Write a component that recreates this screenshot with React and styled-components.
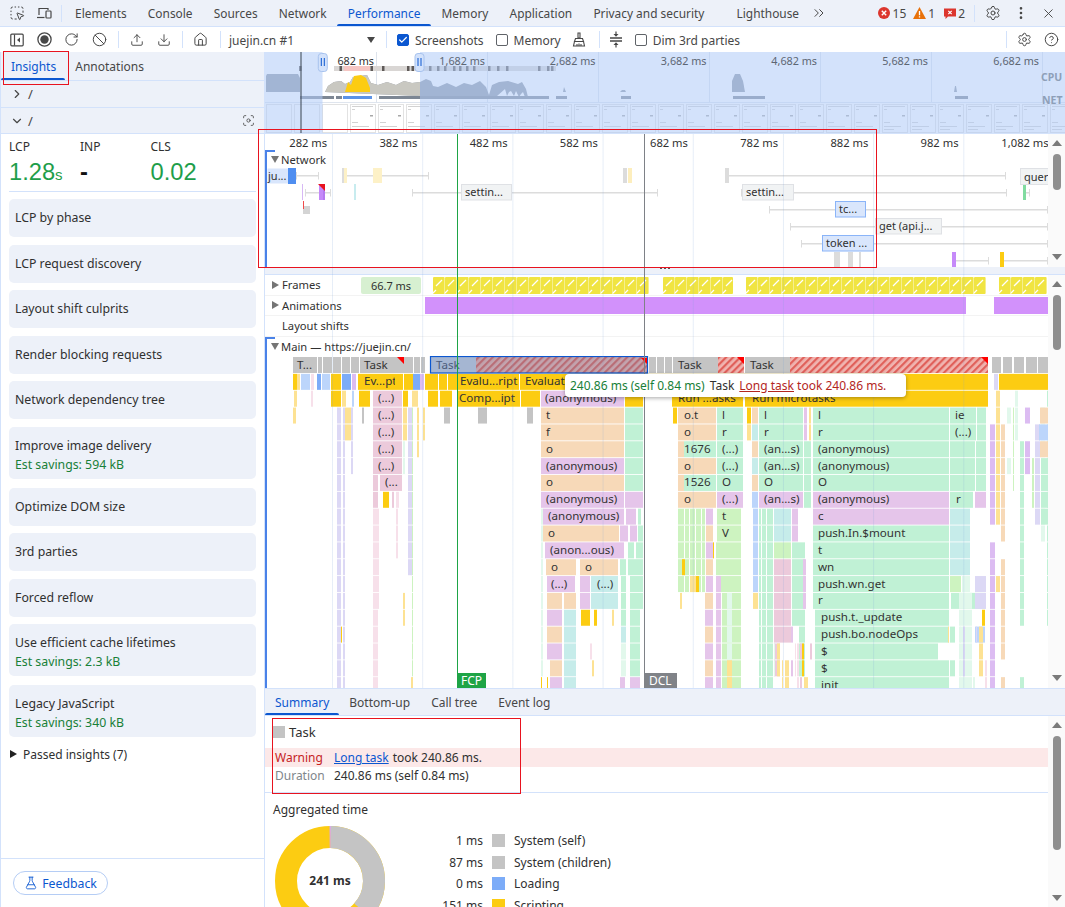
import React from 'react'
import styled, { createGlobalStyle } from 'styled-components'
import {
  SquareDashedMousePointer, RotateCw, Ban, Upload, Download, House,
  Settings, CircleHelp, EllipsisVertical, X, ChevronsRight, ChevronRight, ChevronDown,
  Focus, FlaskConical, Check,
} from 'lucide-react'

const GlobalStyle = createGlobalStyle`
html, body { margin: 0; padding: 0; overflow: hidden; background: #fff; }
body { font-family: "Noto Sans", "Noto Sans CJK SC", sans-serif; font-size: 12px; color: #303030; }
* { box-sizing: border-box; }
`

const PANEL = '#edf1f9'
const LINE = '#d3e2fb'

const Page = styled.div`
position: relative;
width: 1065px;
height: 907px;
overflow: hidden;
display: flex;
flex-direction: column;
`
const TabBar = styled.div`
height: 27px;
flex: none;
display: flex;
align-items: center;
background: ${PANEL};
border-bottom: 1px solid ${LINE};
padding-left: 3.5px;
color: #474747;
`
const IconSlot = styled.span`
display: inline-flex;
align-items: center;
justify-content: center;
width: ${p => p.$w || 27.5}px;
color: ${p => p.$color || '#474747'};
flex: none;
`
const Sep = styled.span`
width: 1px;
height: 17px;
background: ${LINE};
flex: none;
margin: 0 ${p => p.$m ?? 5}px 0 ${p => p.$ml ?? p.$m ?? 5}px;
`
const MainTab = styled.div`
position: relative;
height: 26px;
line-height: 27px;
padding: 0 10.6px;
font-size: 11.9px;
white-space: nowrap;
margin-right: ${p => p.$mr || 0}px;
color: ${p => (p.$active ? '#0b57d0' : '#474747')};
&::after {
  content: '';
  display: ${p => (p.$active ? 'block' : 'none')};
  position: absolute;
  left: 0; right: 0; bottom: 0;
  height: 2.5px;
  background: #0b57d0;
  border-radius: 2px 2px 0 0;
}
`
const Issues = styled.div`
margin-left: auto;
display: flex;
align-items: center;
height: 26px;
font-size: 12px;
color: #474747;
`
const Count = styled.span`
margin: 0 ${p => p.$mr || 0}px 0 ${p => p.$ml || 2}px;
`
const Toolbar = styled.div`
height: 25px;
flex: none;
display: flex;
align-items: center;
background: #fff;
padding-left: 3px;
color: #474747;
`
const TargetSelect = styled.div`
width: 155.5px;
display: flex;
align-items: center;
justify-content: space-between;
padding: 1px 6px 0 3.5px;
font-size: 12px;
`
const DropTriangle = styled.span`
width: 0;
height: 0;
border-left: 4.5px solid transparent;
border-right: 4.5px solid transparent;
border-top: 6px solid #474747;
`
const CheckLabel = styled.label`
display: flex;
align-items: center;
gap: 6px;
margin-left: ${p => p.$ml || 5}px;
padding-top: 1px;
font-size: 12px;
white-space: nowrap;
`
const Box = styled.span`
width: 12px;
height: 12px;
border-radius: 2px;
display: inline-flex;
align-items: center;
justify-content: center;
color: #fff;
background: ${p => (p.$on ? '#0b57d0' : '#fff')};
border: 1px solid ${p => (p.$on ? '#0b57d0' : '#5f6368')};
`
const Spacer = styled.span`flex: 1;`
const Body = styled.div`
flex: 1;
min-height: 0;
display: flex;
`
const Sidebar = styled.aside`
width: 265px;
flex: none;
display: flex;
flex-direction: column;
border-left: 1px solid ${LINE};
border-right: 1px solid ${LINE};
background: #fff;
`
const SideTabs = styled.div`
height: 29px;
flex: none;
display: flex;
background: ${PANEL};
border-bottom: 1px solid ${LINE};
`
const SideTab = styled(MainTab)`
height: 28px;
line-height: 29px;
padding: 0 ${p => (p.$active ? '9px 0 10px' : '10px')};
font-size: 12px;
`
const NavRow = styled.div`
height: ${p => p.$h || 26}px;
flex: none;
display: flex;
align-items: center;
gap: 4px;
padding: 0 9px 0 9px;
background: ${PANEL};
border-bottom: 1px solid ${LINE};
color: #474747;
font-size: 13px;
`
const NavAction = styled.span`
margin-left: auto;
display: inline-flex;
`
const Metrics = styled.div`
margin: 0 8px;
height: 58px;
flex: none;
display: grid;
grid-template-columns: 71px 70.5px 1fr;
border-bottom: 1px solid ${LINE};
padding-top: 5px;
`
const MetricName = styled.div`
font-size: 12px;
line-height: 16px;
`
const MetricValue = styled.div`
font-family: "Liberation Sans", Arial, sans-serif;
font-size: 23.7px;
line-height: 35px;
color: ${p => p.$color || '#1e9e4a'};
font-weight: ${p => (p.$bold ? 700 : 400)};
small { font-size: 15px; }
`
const Cards = styled.div`
display: flex;
flex-direction: column;
padding: 7px 8px 0 8px;
`
const Card = styled.div`
height: ${p => (p.$sub ? 52 : 38)}px;
margin-bottom: ${p => (p.$sub ? 9 : 7.5)}px;
background: ${PANEL};
border-radius: 5px;
padding: ${p => (p.$sub ? '10px 6px 0' : '0 6px')};
display: flex;
flex-direction: column;
justify-content: ${p => (p.$sub ? 'flex-start' : 'center')};
font-size: 12.3px;
line-height: 18px;
color: #303030;
`
const Savings = styled.div`
color: #188038;
font-size: 12.3px;
line-height: 17px;
margin-top: 1px;
`
const Passed = styled.div`
display: flex;
align-items: center;
gap: 5px;
height: 16px;
padding-left: 8px;
font-size: 12px;
`
const SideFooter = styled.div`
margin-top: auto;
height: 49px;
border-top: 1px solid ${LINE};
padding: 12px 0 0 12px;
`
const FeedbackButton = styled.button`
height: 24px;
width: 95px;
border: 1px solid #b5cdf5;
border-radius: 12px;
background: #fff;
color: #0b57d0;
font: inherit;
font-size: 12.3px;
display: flex;
align-items: center;
justify-content: center;
gap: 4px;
padding: 0;
`
const Content = styled.div`
flex: 1;
min-width: 0;
display: flex;
flex-direction: column;
`
const OverviewSvg = styled.svg`
display: block;
flex: none;
border-bottom: 1px solid ${LINE};
`
const Timeline = styled.div`
position: relative;
flex: none;
height: 554px;
display: flex;
flex-direction: column;
`
const Pane = styled.div`
display: flex;
height: ${p => p.$h}px;
flex: none;
`
const PaneMain = styled.div`
width: 783px;
flex: none;
display: flex;
flex-direction: column;
overflow: hidden;
`
const Ruler = styled.div`
height: 16px;
flex: none;
display: flex;
margin-left: -23px;
font-size: 11.2px;
line-height: 17px;
`
const Tick = styled.div`
flex: 0 0 90.2px;
text-align: right;
padding-right: 5px;
white-space: nowrap;
`
const TrackGroup = styled.div`
position: relative;
flex: 1;
min-height: 0;
border-left: 2px solid #4a82e8;
&::before {
  content: '';
  position: absolute;
  left: 0; top: 0;
  width: 8px;
  height: 2px;
  background: #4a82e8;
}
`
const TrackHeading = styled.div`
display: flex;
align-items: center;
gap: 2px;
height: ${p => p.$h || 19}px;
padding-left: ${p => p.$pl || 4}px;
font-size: 11.2px;
color: #303030;
white-space: nowrap;
`
const FloatHeading = styled(TrackHeading)`
position: absolute;
left: 0;
top: 0;
`
const Caret = styled.span`
width: 0;
height: 0;
flex: none;
${p => (p.$open
    ? 'border-left:4.5px solid transparent;border-right:4.5px solid transparent;border-top:7px solid #757575;'
    : `border-top:4.5px solid transparent;border-bottom:4.5px solid transparent;border-left:7px solid ${p.$color || '#757575'};margin:0 1px;`)}
`
const TrackRow = styled.div`
display: flex;
align-items: center;
height: ${p => p.$h || 20}px;
flex: none;
border-bottom: 1px solid #f3f3f3;
`
const TrackName = styled(TrackHeading)`
width: 96px;
flex: none;
height: 100%;
padding-left: ${p => (p.$indent ? 17 : 6)}px;
padding-bottom: 1px;
`
const Drawing = styled.svg`
display: block;
flex: none;
font-size: ${p => p.$fs || 11}px;
font-family: "Noto Sans", "Noto Sans CJK SC", sans-serif;
`
const Splitter = styled.div`
height: 8px;
flex: none;
background: ${PANEL};
border-bottom: 1px solid ${LINE};
position: relative;
&::after {
  content: '';
  position: absolute;
  left: 395px;
  top: 0;
  width: 10px;
  height: 2px;
  background: repeating-linear-gradient(90deg, #555 0 2px, transparent 2px 4px);
}
`
const ScrollTrack = styled.div`
width: 17px;
flex: none;
background: #fafafa;
display: flex;
flex-direction: column;
align-items: center;
padding: ${p => p.$pt || 6}px 0 ${p => p.$pb || 7}px;
`
const ArrowUp = styled.span`
width: 0; height: 0;
border-left: 5.5px solid transparent;
border-right: 5.5px solid transparent;
border-bottom: 6px solid #7a7a7a;
flex: none;
`
const ArrowDown = styled.span`
width: 0; height: 0;
border-left: 5.5px solid transparent;
border-right: 5.5px solid transparent;
border-top: 6px solid #7a7a7a;
flex: none;
margin-top: auto;
`
const Thumb = styled.span`
width: 8px;
height: ${p => p.$h}px;
margin-top: 8px;
background: #8f8f8f;
border-radius: 4px;
flex: none;
`
const GridOverlay = styled.div`
position: absolute;
left: 0;
top: 0;
width: 783px;
bottom: 0;
pointer-events: none;
background-image: linear-gradient(90deg, transparent 89.2px, rgba(120, 160, 215, .18) 89.2px);
background-size: 90.2px 100%;
background-position: -22.2px 0;
`
const Marker = styled.div`
position: absolute;
top: 0;
bottom: 0;
left: ${p => p.$x}px;
width: 1px;
background: ${p => p.$color};
pointer-events: none;
`
const MarkerTag = styled.div`
position: absolute;
left: 0;
bottom: 0;
height: 15px;
padding: 0 ${p => p.$pad || 4}px;
line-height: 15px;
font-size: 12px;
color: #fff;
background: ${p => p.$color};
white-space: nowrap;
`
const Tooltip = styled.div`
position: absolute;
left: 299.5px;
top: 240px;
height: 23px;
width: 341px;
display: flex;
align-items: center;
gap: 5px;
padding: 0 5.5px;
background: #fff;
border-radius: 4px;
box-shadow: 0 1px 4px rgba(0, 0, 0, .35);
font-size: 12px;
white-space: nowrap;
`
const TipTime = styled.span`color: #188038;`
const TipWarn = styled.span`
color: #b3261e;
a { color: inherit; }
`
const Details = styled.div`
flex: 1;
min-height: 0;
display: flex;
flex-direction: column;
border-top: 1px solid ${LINE};
`
const DetailTabs = styled.div`
height: 27px;
flex: none;
display: flex;
background: ${PANEL};
border-bottom: 1px solid ${LINE};
`
const DetailTab = styled(MainTab)`
padding: 0 10px;
margin-right: ${p => (p.$active ? 0 : 1)}px;
font-size: 12px;
`
const DetailBody = styled.div`
flex: 1;
min-height: 0;
display: flex;
`
const DetailMain = styled.div`
flex: 1;
min-width: 0;
overflow: hidden;
`
const EntryTitle = styled.div`
height: 32px;
display: flex;
align-items: center;
gap: 4px;
padding-left: 8px;
font-size: 13px;
`
const Swatch = styled.span`
width: ${p => p.$s || 12}px;
height: ${p => p.$s || 12}px;
flex: none;
background: ${p => p.$color};
`
const InfoRow = styled.div`
height: ${p => p.$h || 19}px;
display: grid;
grid-template-columns: 59px 1fr;
align-items: center;
padding-left: 10px;
background: ${p => (p.$warn ? '#fce8e8' : 'transparent')};
font-size: 12px;
`
const InfoName = styled.span`
color: ${p => (p.$warn ? '#c5221f' : '#80868b')};
`
const InfoLink = styled.a`
color: #0b57d0;
text-decoration: underline;
margin-right: 4px;
`
const Aggregated = styled.div`
margin-top: 8px;
border-top: 1px solid ${LINE};
padding: 8px 8px 0;
`
const AggTitle = styled.div`
font-size: 12px;
line-height: 17px;
`
const AggRow = styled.div`
display: flex;
margin-top: 5px;
`
const Donut = styled.div`
position: relative;
width: 110px;
height: 110px;
flex: none;
margin: 3px 0 0 2px;
`
const DonutLabel = styled.b`
position: absolute;
left: 0; right: 0; top: 46px;
text-align: center;
font-size: 12px;
line-height: 17px;
`
const Legend = styled.div`
display: grid;
grid-template-columns: 98px 13px auto;
column-gap: 9px;
row-gap: 8.7px;
align-items: center;
align-content: start;
margin-top: 11px;
font-size: 12px;
line-height: 13px;
justify-content: start;
`
const LegendValue = styled.span`
text-align: right;
white-space: nowrap;
`
const Annotation = styled.div`
position: absolute;
border: 1px solid #e8131f;
pointer-events: none;
left: ${p => p.$x}px;
top: ${p => p.$y}px;
width: ${p => p.$w}px;
height: ${p => p.$h}px;
`

/* ---- small drawn icons ---- */
const DeviceIcon = () => (
  <svg width="16" height="16" viewBox="0 0 16 16" fill="none" stroke="currentColor" strokeWidth="1.2">
    <path d="M3 10V3.5h9V5" /><path d="M1 12.5h7.5" /><rect x="10" y="6" width="5" height="7" rx=".8" />
  </svg>
)
const SidePanelIcon = () => (
  <svg width="14" height="14" viewBox="0 0 14 14" fill="none" stroke="currentColor" strokeWidth="1.2">
    <rect x=".8" y="1.2" width="12.4" height="11.6" rx="1" /><path d="M4.5 1.5v11" />
    <path d="M10 4.6v4.8L7 7z" fill="currentColor" stroke="none" />
  </svg>
)
const RecordIcon = () => (
  <svg width="15" height="15" viewBox="0 0 15 15" fill="none" stroke="currentColor">
    <circle cx="7.5" cy="7.5" r="6.6" strokeWidth="1.3" /><circle cx="7.5" cy="7.5" r="4.2" fill="currentColor" stroke="none" />
  </svg>
)
const BroomIcon = () => (
  <svg width="14" height="15" viewBox="0 0 14 15" fill="none" stroke="currentColor" strokeWidth="1.1">
    <path d="M6 1h2v5H6z" /><path d="M3.5 6.5h7l1 3h-9z" /><path d="M2.5 9.5l-1 4.5h11l-1-4.5" /><path d="M5 14v-2M7 14v-2.5M9 14v-2" />
  </svg>
)
const CollapseIcon = () => (
  <svg width="14" height="17" viewBox="0 0 14 17" fill="none" stroke="currentColor" strokeWidth="1.2">
    <path d="M1 7h12M1 10h12" strokeWidth="1.4" />
    <path d="M7 .5v2.5M7 14v2.5" />
    <path d="M4.5 3h5L7 5.8zM4.5 14h5L7 11.2z" fill="currentColor" stroke="none" />
  </svg>
)
const ErrorIcon = () => (
  <svg width="12" height="12" viewBox="0 0 12 12">
    <circle cx="6" cy="6" r="6" fill="#dc362e" /><path d="M3.8 3.8l4.4 4.4M8.2 3.8l-4.4 4.4" stroke="#fff" strokeWidth="1.4" />
  </svg>
)
const WarnIcon = () => (
  <svg width="13" height="12" viewBox="0 0 13 12">
    <path d="M6.5 0L13 12H0z" fill="#e8710a" /><path d="M6.5 4v4.2M6.5 9.2v1.3" stroke="#fff" strokeWidth="1.3" />
  </svg>
)
const IssueIcon = () => (
  <svg width="12" height="12" viewBox="0 0 12 12">
    <path d="M0 1.5h12v8H4L1.5 12V9.5H0z" fill="#dc362e" /><path d="M4.3 3.8l3.4 3.4M7.7 3.8L4.3 7.2" stroke="#fff" strokeWidth="1.2" />
  </svg>
)

/* ---- overview strip ---- */
const thumbs = Array.from({ length: 29 }, (_, i) => 266 + i * 28)
const ovLabels = ['682 ms', '1,682 ms', '2,682 ms', '3,682 ms', '4,682 ms', '5,682 ms', '6,682 ms']
const ovLabelEnd = [374, 485, 595.5, 706.5, 817, 928, 1039]
const ovLines = [376, 487, 598, 709, 820, 931, 1042]
const ovTicks = [299, 339.5, 370.5, 382, 407, 411.5, 429, 437, 444, 453, 459, 466, 473, 488, 497, 506, 538, 547, 551]
const netBars = [[300, 334, '#7d8794'], [336, 342, '#7d8794'], [343, 372, '#5c93e6'], [379, 549, '#7d8794'], [556, 567, '#7d8794'], [621, 631, '#7d8794'], [733, 765, '#7d8794'], [955, 968, '#7d8794']]
const CPU_WAVE = 'M325 92l3-6 6-4 7-1 4 3 5-2 3-5 14-2 4 8 7 2 9-3 9 3 8-4 8 2 8-1 6-3 5 2 2 5 5 1 9-4 9 4 8-4 8 2 8-4 6 6 3 8 3-10 7-3 9-1 10 3 4-2 4 7 2 8h-3l-2-5-2 2-2 3-3-6-2 5-3-5-2 1-2 4-2-7-8 7-3 3z'

function Overview() {
  return (
    <OverviewSvg width="800" height="82" viewBox="265 52 800 81">
      <defs>
        <clipPath id="ovSelection"><rect x="322.5" y="52" width="97.5" height="81" /></clipPath>
      </defs>
      <rect x="265" y="52" width="800" height="81" fill="#fff" />
      {ovLines.map(x => <rect key={x} x={x} y="52" width="1" height="50" fill="#dde3ec" />)}
      <rect x="334" y="66" width="222" height="5" fill="#d9d6d4" />
      <rect x="344" y="66" width="26" height="5" fill="#f5c6c3" />
      {ovTicks.map(x => <rect key={x} x={x} y="66" width="2.5" height="5" fill="#5f5a58" />)}
      <path d="M267 74h31l2 4v14h-34v-16z" fill="#8f98a6" />
      <path d={CPU_WAVE} fill="#8f98a6" />
      <path d={CPU_WAVE} fill="#c9c8c1" clipPath="url(#ovSelection)" />
      <path d="M345 92l3-10 3 3 3-9 7-1 5 3 4 10v4z" fill="#fccc12" />
      <path d="M732 92v-11l3-7h5l3 7 2 11z" fill="#8f98a6" />
      <path d="M620 92l2-2h3l1 2zM954 92l1-6h1l1 6zM563 92l1-5 2 5z" fill="#8f98a6" />
      {netBars.map(([a, e, c]) => <rect key={a} x={a} y="96" width={e - a} height="3" fill={c} />)}
      <rect x="265" y="102" width="800" height="1" fill="#dfe5ee" />
      {thumbs.map((x, i) => (
        <g key={x}>
          <rect x={x + .5} y="104.5" width="25" height="28" fill="#fff" stroke="#e2e2e2" />
          {i > 2 && <g fill="#d2d2d2">
            <rect x={x + 2} y="106" width="21" height="1" />
            <rect x={x + 2} y="109" width="3" height="1" />
            <rect x={x + 20} y="115" width="3" height="1.5" fill="#a8a8a8" />
            <rect x={x + 2} y="122" width="6" height="1" />
            <rect x={x + 2} y="126" width="17" height="1" />
            <rect x={x + 2} y="129" width="10" height="1" />
          </g>}
        </g>
      ))}
      <rect x="265" y="52" width="57.5" height="81" fill="#b0cbf7" opacity=".56" />
      <rect x="420" y="52" width="645" height="81" fill="#b0cbf7" opacity=".56" />
      <rect x="300.5" y="52" width="1" height="81" fill="#38424f" />
      {ovLabels.map((t, i) => <text key={t} x={ovLabelEnd[i]} y="65" textAnchor="end" fontSize="10.8" fill={i === 0 ? '#303030' : '#5d6673'} fontFamily="Noto Sans">{t}</text>)}
      <text x="1041" y="81" fontSize="10.5" fontWeight="700" fill="#8e9fb8" fontFamily="Noto Sans">CPU</text>
      <text x="1042" y="104" fontSize="10.5" fontWeight="700" fill="#8e9fb8" fontFamily="Noto Sans">NET</text>
      {[322.8, 419.5].map(x => (
        <g key={x}>
          <rect x={x - 4.5} y="53.5" width="9" height="18" rx="3" fill="#d3e2fb" stroke="#a8c3ee" />
          <path d={`M${x - 1.5} 58v8M${x + 1.5} 58v8`} stroke="#0b57d0" />
        </g>
      ))}
    </OverviewSvg>
  )
}

/* ---- network track ---- */
const whisk = [[296, 319, 175], [342, 429, 175], [725, 1006, 175], [305, 331, 192], [412, 658, 192], [741, 1007, 192], [769, 1048, 209], [790, 1048, 226], [801, 1048, 243], [954, 989, 260], [1003, 1048, 260], [1023, 1030, 192]]
const netBoxes = [
  [461, 184, 50, '#f1f3f4', '#dfe1e5', 'settin...'],
  [742, 184, 51, '#f1f3f4', '#dfe1e5', 'settin...'],
  [835, 201, 30, '#d9e6fc', '#8ab4f8', 'tc...'],
  [875, 218, 66, '#f1f3f4', '#dfe1e5', 'get (api.j...'],
  [822, 235, 51, '#d9e6fc', '#8ab4f8', 'token ...'],
]
const netBlobs = [
  [342, 168, 4, 15, '#dcdcdc'], [344, 168, 3, 15, '#fdf1c7'], [373, 168, 9, 15, '#fdf1c7'],
  [623, 168, 4, 15, '#dcdcdc'], [628, 168, 4, 15, '#fdeebd'], [725, 168, 4, 15, '#dcdcdc'],
  [302, 184, 1, 16, '#d7b8f5'], [319, 184, 5, 16, '#c58af9'], [323, 184, 2, 16, '#b57af0'], [354, 184, 2, 16, '#c8ecef'],
  [1023, 184, 3, 16, '#81dba0'], [303, 206, 7, 8, '#d4d4d4'], [303, 201, 1, 8, '#f04b4b'],
  [834, 252, 6, 15, '#dcdcdc'], [848, 252, 5, 15, '#dcdcdc'], [859, 252, 2, 15, '#dcdcdc'], [952, 252, 4, 15, '#c58af9'],
  [1000, 252, 4, 15, '#fccc12'],
]

function NetworkChart() {
  return (
    <Drawing width="781" height="117" viewBox="267 150 781 117">
      {whisk.map(([a, e, y]) => (
        <g key={`${a}-${y}`} fill="#dcdcdc">
          <rect x={a} y={y} width={e - a} height="1.5" />
          <rect x={e - 1} y={y - 3} width="1" height="7.5" />
          <rect x={a} y={y - 3} width="1" height="7.5" />
        </g>
      ))}
      {netBlobs.map(([x, y, w, h, c]) => <rect key={`${x}-${y}`} x={x} y={y} width={w} height={h} fill={c} />)}
      <rect x="267.5" y="168.5" width="21" height="15" fill="#d9e6fc" />
      <rect x="288" y="168" width="8" height="16" fill="#4f8ef0" />
      <text x="268" y="180" fill="#303030">ju...</text>
      <path d="M318 184h7v7z" fill="#e8131f" />
      <rect x="1020.5" y="168.5" width="28" height="16" fill="#f1f3f4" stroke="#dfe1e5" />
      <text x="1024" y="180.5" fill="#303030">quer</text>
      {netBoxes.map(([x, y, w, f, s, t]) => (
        <g key={t + x}>
          <rect x={x + .5} y={y + .5} width={w} height="15.5" fill={f} stroke={s} />
          <text x={x + 4} y={y + 12} fill="#303030">{t}</text>
        </g>
      ))}
    </Drawing>
  )
}

/* ---- frames ---- */
const frameRuns = [[433, 649], [663, 733], [746, 986], [999, 1048]]
function FramesChart() {
  const frames = []
  frameRuns.forEach(([a, e]) => {
    for (let x = a; x < e - 2; x += 12) frames.push([x, Math.min(11.6, e - x)])
  })
  return (
    <Drawing width="687" height="17" viewBox="361 277 687 17">
      <rect x="361" y="277" width="60" height="17" rx="2" fill="#d7f0d1" />
      <text x="391" y="289.5" textAnchor="middle" fill="#303030">66.7 ms</text>
      {frames.map(([x, w]) => (
        <g key={x}>
          <rect x={x} y="277" width={w} height="17" rx="1" fill="#f0e442" />
          <path d={`M${x + 3} 286l6-6`} stroke="#fff" strokeWidth="1.3" />
          <path d={`M${x} 293l3-3`} stroke="#fff" strokeWidth="1.3" />
        </g>
      ))}
    </Drawing>
  )
}
const AnimationsChart = () => (
  <Drawing width="687" height="17" viewBox="361 298 687 17">
    <rect x="425" y="298" width="541" height="17" fill="#d291fb" />
    <rect x="994" y="298" width="54" height="17" fill="#d291fb" />
  </Drawing>
)

/* ---- flame chart ---- */
const C = {
  gray: '#c4c4c4', yel: '#fccc12', lyel: '#fde293', peach: '#f7d9b8', mauve: '#eccadb', lilac: '#e5c5ea',
  mint: '#c0f1d5', cyan: '#c6ecea', vio: '#dcd8f5', blue: '#7cacf8', lblue: '#bcd5fb', lime: '#cdf3c0',
  fpink: '#f7e0ea', fmint: '#e2f8ec', purple: '#dcbcf2', white: '#fff',
}
const rowY = r => 357 + r * 16.85
const bars = []
const b = (r, x1, x2, c, label, lx) => bars.push({ r, x1, x2, c, label, lx })
const col = (x1, x2, c, r1, r2) => { for (let r = r1; r <= r2; r++) b(r, x1, x2, c) }

// seeded so the slivers stay the same on every render
let seed = 7
const rnd = () => { seed = (seed * 16807) % 2147483647; return (seed - 1) / 2147483646 }
const slivers = (x1, x2, r1, r2, palette, fill = .75) => {
  let x = x1
  while (x < x2) {
    const w = 1 + Math.floor(rnd() * 5)
    const c = palette[Math.floor(rnd() * palette.length)]
    const start = r1 + Math.floor(rnd() * 3)
    const end = start + 3 + Math.floor(rnd() * (r2 - r1))
    for (let r = start; r <= Math.min(end, r2); r++) {
      if (rnd() < fill) b(r, x, Math.min(x + w, x2), c)
    }
    x += w + (rnd() < .5 ? 1 : 2)
  }
}

// task row
;[[318, 322], [323, 332], [333, 341], [342, 350], [351, 359], [404, 413], [414, 420], [421, 425], [649, 656], [657, 664], [665, 672], [992, 1001], [1003, 1012], [1014, 1024], [1026, 1037], [1038, 1048]].forEach(([a, e]) => b(0, a, e, C.gray))
b(0, 293, 317, C.gray, 'T...', 297)
b(0, 360, 404, C.gray, 'Task', 364)
b(0, 673, 718, C.gray, 'Task', 678)
b(0, 745, 790, C.gray, 'Task', 750)

// evaluate / compile rows
;[[293, 297, C.yel], [297, 300, C.lyel], [301, 310, C.lblue], [311, 314, C.fpink], [317, 321, C.blue], [322, 330, C.lblue], [331, 341, C.yel], [342, 351, C.blue], [352, 356, C.purple], [404, 413, C.yel], [413, 420, C.blue], [420, 424, C.purple], [425, 428, C.yel], [428, 438, C.yel], [439, 447, C.yel], [448, 457, C.yel]].forEach(([a, e, c]) => b(1, a, e, c))
b(1, 358, 395, C.yel, 'Ev...pt', 364)
b(1, 395, 403, C.yel)
b(1, 457, 519, C.yel, 'Evalu...ript', 460)
b(1, 520, 988, C.yel, 'Evaluate', 525)
;[[994, 998, C.vio], [999, 1048, C.yel]].forEach(([a, e, c]) => b(1, a, e, c))
;[[294, 297, C.lyel], [311, 313, C.fpink], [331, 341, C.yel], [342, 346, C.lyel], [352, 354, C.lblue], [359, 370, C.yel], [403, 408, C.yel], [412, 418, C.lyel], [428, 438, C.yel], [440, 452, C.yel]].forEach(([a, e, c]) => b(2, a, e, c))
b(2, 373, 402, C.mauve, '(...)', 378)
b(2, 458, 520, C.yel, 'Comp...ipt', 459)
b(2, 521, 540, C.yel)
b(2, 541, 624, C.lilac, '(anonymous)', 545)
b(2, 625, 643, C.yel)
b(2, 672, 743, C.yel, 'Run ...asks', 678)
b(2, 745, 988, C.yel, 'Run microtasks', 752)

// left slivers
;[3, 4, 5, 6].forEach(r => b(r, 373, 402, C.mauve, '(...)', 378))
b(7, 373, 378, C.mauve); b(7, 380, 402, C.mauve, '(...', 385)
b(8, 373, 378, C.mauve); b(8, 383, 389, C.yel); b(8, 392, 394, C.mauve); b(8, 396, 399, C.fpink)
col(337, 341, C.vio, 3, 19)
col(343, 345, C.vio, 3, 19)
col(373, 378, C.fpink, 9, 19)
col(408, 412, C.vio, 3, 12)
col(412, 413, C.lime, 3, 19)
col(378, 379, C.fpink, 9, 14)
col(396, 398, C.fpink, 9, 11)
col(293, 296, C.lyel, 3, 3)
col(345, 351, C.lyel, 3, 4)
col(351, 353, C.vio, 3, 6)
col(362, 364, C.gray, 3, 3)
col(444, 450, C.gray, 3, 3)
col(478, 487, C.gray, 3, 3)
col(527, 533, C.gray, 3, 3)
col(403, 407, C.lyel, 3, 4)
col(403, 405, C.fmint, 5, 6)
col(417, 419, C.lyel, 3, 5)
col(423, 425, C.lyel, 3, 4)
b(15, 403, 405, C.lyel); b(14, 403, 405, C.lyel); b(19, 411, 413, C.lyel); b(16, 341, 342, C.yel)

// middle stack
b(3, 541, 624, C.peach, 't', 546); b(4, 541, 624, C.peach, 'f', 546); b(5, 541, 624, C.peach, 'o', 546)
b(6, 541, 624, C.lilac, '(anonymous)', 546); b(7, 541, 624, C.peach, 'o', 546)
col(625, 643, C.mint, 3, 7)
b(8, 541, 624, C.lilac, '(anonymous)', 546); b(8, 625, 643, C.lilac)
b(9, 543, 624, C.lilac, '(anonymous)', 548); b(9, 626, 636, C.lilac); b(9, 638, 641, C.mint)
b(10, 543, 619, C.peach, 'o', 548); b(10, 620, 628, C.lilac); b(10, 630, 637, C.lilac); b(10, 638, 643, C.mint)
b(11, 545, 624, C.lilac, '(anon...ous)', 550); b(11, 628, 634, C.mint); b(11, 636, 643, C.mint)
b(12, 546, 576, C.peach, 'o', 551); b(12, 580, 618, C.peach, 'o', 585); b(12, 620, 626, C.mint); b(12, 628, 643, C.mint)
b(13, 547, 575, C.lilac, '(...)', 551); b(13, 580, 590, C.lilac); b(13, 591, 618, C.cyan, '(...)', 597); b(13, 621, 626, C.mint); b(13, 630, 643, C.mint)
b(14, 547, 562, C.peach); b(14, 564, 576, C.peach); b(14, 580, 590, C.lilac); b(14, 591, 618, C.cyan); b(14, 621, 626, C.mint); b(14, 630, 643, C.mint)
b(15, 547, 562, C.lilac); b(15, 564, 576, C.cyan); b(15, 581, 590, C.yel); b(15, 594, 597, C.yel); b(15, 612, 614, C.lyel); b(15, 621, 626, C.mint); b(15, 630, 640, C.mint)
b(16, 547, 562, C.peach); b(16, 564, 576, C.cyan); b(16, 621, 626, C.cyan); b(16, 630, 640, C.mint)
b(17, 547, 562, C.lilac); b(17, 564, 576, C.cyan); b(17, 590, 592, C.fpink); b(17, 621, 626, C.fmint); b(17, 630, 640, C.mint)
b(18, 550, 562, C.peach); b(18, 564, 576, C.cyan); b(18, 592, 594, C.lyel); b(18, 621, 626, C.fmint); b(18, 630, 640, C.mint)
b(19, 550, 562, C.lilac); b(19, 564, 576, C.cyan); b(19, 541, 542, C.yel); b(19, 547, 548, C.yel); b(19, 620, 625, C.lilac); b(19, 630, 640, C.lilac)
col(541, 543, C.fmint, 9, 18)

// right stacks
b(3, 673, 677, C.yel); b(3, 678, 716, C.peach, 'o.t', 684); b(3, 717, 743, C.mint, 'l', 722)
b(4, 678, 716, C.peach, 'o', 684); b(4, 717, 743, C.mint, 'r', 722)
b(5, 678, 684, C.peach); b(5, 684, 716, C.mint, '1676', 684); b(5, 717, 743, C.mint, '(...)', 722)
b(6, 678, 716, C.peach, 'o', 684); b(6, 717, 743, C.mint, '(...)', 722)
b(7, 678, 684, C.peach); b(7, 684, 716, C.mint, '1526', 684); b(7, 717, 743, C.mint, 'O', 722)
b(8, 678, 716, C.peach, 'o', 684); b(8, 717, 743, C.lilac, '(...)', 722)
b(3, 747, 751, C.yel); b(3, 752, 758, C.peach); b(3, 759, 803, C.mint, 'l', 764); b(3, 804, 807, C.lilac); b(3, 809, 811, C.lyel)
b(4, 747, 751, C.lyel); b(4, 752, 758, C.cyan); b(4, 759, 803, C.mint, 'r', 764); b(4, 804, 807, C.lilac); b(4, 809, 811, C.lyel)
b(5, 752, 758, C.peach); b(5, 759, 803, C.mint, '(an...s)', 764); b(5, 804, 811, C.mint)
b(6, 752, 758, C.cyan); b(6, 759, 803, C.mint, '(an...s)', 764); b(6, 804, 811, C.mint)
b(7, 752, 758, C.peach); b(7, 759, 803, C.mint, 'O', 764); b(7, 804, 811, C.mint)
b(8, 752, 758, C.lblue); b(8, 759, 803, C.lilac, '(an...s)', 764); b(8, 804, 811, C.mint)
const mainLabels = ['l', 'r', '(anonymous)', '(anonymous)', 'O', '(anonymous)', 'c', 'push.In.$mount', 't', 'wn', 'push.wn.get', 'r', 'push.t._update', 'push.bo.nodeOps', '$', '$', 'init']
mainLabels.forEach((t, i) => {
  const r = i + 3
  const lilac = r === 8 || r === 9
  b(r, r < 15 ? 813 : 815, r === 17 ? 938 : 949, lilac ? C.lilac : C.mint, t, r >= 15 ? 821 : 818)
})
b(3, 950, 976, C.mint, 'ie', 955); b(3, 977, 986, C.mint)
b(4, 950, 976, C.mint, '(...)', 955); b(4, 977, 986, C.mint)
col(950, 975, C.mint, 5, 7); col(976, 986, C.mint, 5, 7)
b(8, 950, 973, C.mint, 'r', 956); b(8, 975, 986, C.lilac)
col(950, 970, C.cyan, 9, 12); col(950, 961, C.lime, 13, 13); col(962, 970, C.fmint, 13, 13)

// label-free texture on the lower right side of the stacks
col(678, 705, C.lime, 9, 13)
col(706, 713, C.lilac, 9, 9); col(706, 713, C.peach, 10, 10); col(706, 713, C.lilac, 11, 11); col(706, 713, C.peach, 12, 12); col(706, 713, C.lilac, 13, 13)
b(9, 717, 741, C.lime, 't', 722); b(10, 717, 741, C.lime, 'V', 722)
col(716, 741, C.lime, 11, 13)
col(705, 713, C.peach, 14, 14); col(705, 713, C.lilac, 15, 15); col(705, 713, C.peach, 16, 16); col(705, 713, C.lilac, 17, 17); col(705, 713, C.peach, 18, 18); col(705, 713, C.lilac, 19, 19)
col(716, 721, C.lilac, 13, 19); col(722, 741, C.lime, 14, 19)
col(727, 732, C.fmint, 14, 17); col(727, 732, C.lyel, 18, 19)
;[684, 689, 695, 701].forEach(x => col(x, x + 1, C.white, 9, 13))
b(13, 690, 698, C.lyel); b(13, 696, 699, C.yel); b(12, 682, 685, C.yel); b(11, 713, 714, C.yel); b(14, 680, 682, C.lyel)
col(753, 758, C.lblue, 9, 13)
b(14, 753, 758, C.lyel)
col(759, 773, C.mint, 9, 19); col(761, 762, C.white, 9, 19); col(766, 767, C.white, 9, 19)
col(774, 791, C.cyan, 9, 10)
col(774, 791, C.lime, 11, 11)
col(774, 791, C.mauve, 12, 16)
col(774, 780, C.mauve, 17, 18)
col(792, 798, C.lilac, 9, 10); col(792, 805, C.mint, 11, 15); col(799, 805, C.mint, 16, 18)
col(803, 806, C.lilac, 12, 14); col(802, 804, C.yel, 17, 18)
slivers(774, 812, 16, 19, [C.lilac, C.fpink, C.mauve, C.lyel, C.fmint], .6)
col(951, 985, C.mint, 14, 14); col(959, 972, C.fmint, 14, 19)
col(975, 986, C.vio, 13, 14); col(975, 985, C.lblue, 16, 16)
col(982, 985, C.yel, 15, 15)
slivers(950, 988, 15, 19, [C.mint, C.fmint, C.lyel, C.fpink, C.vio], .55)
col(948, 949, C.lyel, 16, 16)

// far right pastel texture
slivers(990, 1048, 2, 19, [C.lyel, C.mint, C.lime, C.fmint, C.mint, C.vio, C.peach, C.lyel, C.fmint, C.purple], .8)
col(1040, 1048, C.peach, 3, 3); col(1039, 1048, C.lblue, 4, 4); col(1040, 1048, C.peach, 5, 5); col(1041, 1048, C.mint, 6, 9)

function FlameChart() {
  return (
    <Drawing $fs={11.6} width="781" height="332" viewBox="267 356 781 332">
      <defs>
        <pattern id="longTask" width="5" height="5" patternUnits="userSpaceOnUse" patternTransform="rotate(-45)">
          <rect width="5" height="5" fill="#f0b4b0" />
          <rect width="5" height="2.2" fill="#e0605a" />
        </pattern>
      </defs>
      {bars.map((s, i) => (
        <g key={i}>
          <rect x={s.x1} y={rowY(s.r)} width={s.x2 - s.x1} height="16" fill={s.c} />
          {s.label && <text x={s.lx} y={rowY(s.r) + 11.5} fill="#333">{s.label}</text>}
        </g>
      ))}
      <rect x="431" y="357" width="216" height="16" fill="#a5b6d2" />
      <rect x="476" y="357" width="171" height="16" fill="url(#longTask)" />
      <rect x="476" y="357" width="171" height="16" fill="#6f86ad" opacity=".35" />
      <text x="436" y="368.5" fill="#4c5c7a">Task</text>
      <rect x="430.5" y="356.5" width="217" height="16.5" fill="none" stroke="#0b57d0" strokeWidth="1.2" />
      <rect x="718" y="357" width="26" height="16" fill="url(#longTask)" />
      <rect x="790" y="357" width="198" height="16" fill="url(#longTask)" />
      <path d="M397 357h7v7zM737 357h7v7zM981 357h7v7zM641 358h6v6z" fill="#f00" />
    </Drawing>
  )
}

const legend = [
  ['1 ms', '#c4c4c4', 'System (self)'],
  ['87 ms', '#c4c4c4', 'System (children)'],
  ['0 ms', '#7cacf8', 'Loading'],
  ['151 ms', '#fccc12', 'Scripting'],
]
const insights = [
  ['LCP by phase'], ['LCP request discovery'], ['Layout shift culprits'], ['Render blocking requests'],
  ['Network dependency tree'], ['Improve image delivery', 'Est savings: 594 kB'], ['Optimize DOM size'],
  ['3rd parties'], ['Forced reflow'], ['Use efficient cache lifetimes', 'Est savings: 2.3 kB'], ['Legacy JavaScript', 'Est savings: 340 kB'],
]
const mainTabs = [['Elements'], ['Console'], ['Sources'], ['Network'], ['Performance', true], ['Memory'], ['Application'], ['Privacy and security', false, 11], ['Lighthouse']]
const ticks = ['282 ms', '382 ms', '482 ms', '582 ms', '682 ms', '782 ms', '882 ms', '982 ms', '1,082 ms']

export default function App() {
  return (
    <Page>
      <GlobalStyle />
      <TabBar>
        <IconSlot $w={27}><SquareDashedMousePointer size={16} strokeWidth={1.5} /></IconSlot>
        <IconSlot $w={27}><DeviceIcon /></IconSlot>
        <Sep $m={3} $ml={3} />
        {mainTabs.map(([t, on, mr]) => <MainTab key={t} $active={on} $mr={mr}>{t}</MainTab>)}
        <IconSlot $w={18}><ChevronsRight size={16} strokeWidth={1.5} /></IconSlot>
        <Issues>
          <ErrorIcon /><Count $ml={3} $mr={7}>15</Count>
          <WarnIcon /><Count $mr={9}>1</Count>
          <IssueIcon /><Count>2</Count>
          <Sep $m={0} $ml={9} />
          <IconSlot $w={36}><Settings size={16} strokeWidth={1.5} /></IconSlot>
          <IconSlot $w={20}><EllipsisVertical size={16} strokeWidth={2} /></IconSlot>
          <IconSlot $w={34}><X size={15} strokeWidth={1.5} /></IconSlot>
        </Issues>
      </TabBar>
      <Toolbar>
        <IconSlot><SidePanelIcon /></IconSlot>
        <IconSlot><RecordIcon /></IconSlot>
        <IconSlot><RotateCw size={15} strokeWidth={1.6} /></IconSlot>
        <IconSlot><Ban size={15} strokeWidth={1.6} /></IconSlot>
        <Sep $m={4.5} />
        <IconSlot><Upload size={14} strokeWidth={1.6} /></IconSlot>
        <IconSlot><Download size={14} strokeWidth={1.6} /></IconSlot>
        <Sep $m={4} />
        <IconSlot><House size={15} strokeWidth={1.6} /></IconSlot>
        <Sep $m={5} />
        <TargetSelect>juejin.cn #1<DropTriangle /></TargetSelect>
        <Sep $m={5} />
        <CheckLabel><Box $on><Check size={10} strokeWidth={3} /></Box>Screenshots</CheckLabel>
        <CheckLabel $ml={12}><Box />Memory</CheckLabel>
        <IconSlot $w={36}><BroomIcon /></IconSlot>
        <Sep $m={2} />
        <IconSlot $w={28}><CollapseIcon /></IconSlot>
        <CheckLabel><Box />Dim 3rd parties</CheckLabel>
        <Spacer />
        <Sep $m={4} />
        <IconSlot $w={26}><Settings size={15} strokeWidth={1.6} /></IconSlot>
        <IconSlot $w={28}><CircleHelp size={15} strokeWidth={1.6} /></IconSlot>
      </Toolbar>
      <Body>
        <Sidebar>
          <SideTabs>
            <SideTab $active>Insights</SideTab>
            <SideTab>Annotations</SideTab>
          </SideTabs>
          <NavRow $h={27}><ChevronRight size={14} />/</NavRow>
          <NavRow><ChevronDown size={14} />/<NavAction><Focus size={13} strokeWidth={1.5} /></NavAction></NavRow>
          <Metrics>
            <div><MetricName>LCP</MetricName><MetricValue>1.28<small>s</small></MetricValue></div>
            <div><MetricName>INP</MetricName><MetricValue $color="#111" $bold>-</MetricValue></div>
            <div><MetricName>CLS</MetricName><MetricValue>0.02</MetricValue></div>
          </Metrics>
          <Cards>
            {insights.map(([t, s]) => (
              <Card key={t} $sub={!!s}>{t}{s && <Savings>{s}</Savings>}</Card>
            ))}
          </Cards>
          <Passed><Caret $color="#222" />Passed insights (7)</Passed>
          <SideFooter>
            <FeedbackButton><FlaskConical size={14} strokeWidth={1.5} />Feedback</FeedbackButton>
          </SideFooter>
        </Sidebar>
        <Content>
          <Overview />
          <Timeline>
            <Pane $h={133}>
              <PaneMain>
                <Ruler>{ticks.map(t => <Tick key={t}>{t}</Tick>)}</Ruler>
                <TrackGroup>
                  <NetworkChart />
                  <FloatHeading><Caret $open />Network</FloatHeading>
                </TrackGroup>
              </PaneMain>
              <ScrollTrack><ArrowUp /><Thumb $h={36} /><ArrowDown /></ScrollTrack>
            </Pane>
            <Splitter />
            <Pane $h={413}>
              <PaneMain>
                <TrackRow $h={21}><TrackName><Caret />Frames</TrackName><FramesChart /></TrackRow>
                <TrackRow><TrackName><Caret />Animations</TrackName><AnimationsChart /></TrackRow>
                <TrackRow $h={21}><TrackName $indent>Layout shifts</TrackName></TrackRow>
                <TrackGroup>
                  <TrackHeading><Caret $open />Main — https://juejin.cn/</TrackHeading>
                  <FlameChart />
                </TrackGroup>
              </PaneMain>
              <ScrollTrack><ArrowUp /><Thumb $h={55} /><ArrowDown /></ScrollTrack>
            </Pane>
            <GridOverlay />
            <Marker $x={192} $color="#1ea446"><MarkerTag $color="#1ea446">FCP</MarkerTag></Marker>
            <Marker $x={379} $color="#7e8187"><MarkerTag $color="#808388" $pad={5}>DCL</MarkerTag></Marker>
            <Tooltip>
              <TipTime>240.86 ms (self 0.84 ms)</TipTime>
              <span>Task</span>
              <TipWarn><a href="#long-task">Long task</a> took 240.86 ms.</TipWarn>
            </Tooltip>
          </Timeline>
          <Details>
            <DetailTabs>
              <DetailTab $active>Summary</DetailTab>
              <DetailTab>Bottom-up</DetailTab>
              <DetailTab>Call tree</DetailTab>
              <DetailTab>Event log</DetailTab>
            </DetailTabs>
            <DetailBody>
              <DetailMain>
                <EntryTitle><Swatch $color="#c4c4c4" />Task</EntryTitle>
                <InfoRow $warn>
                  <InfoName $warn>Warning</InfoName>
                  <span><InfoLink href="#long-task">Long task</InfoLink>took 240.86 ms.</span>
                </InfoRow>
                <InfoRow $h={17}>
                  <InfoName>Duration</InfoName>
                  <span>240.86 ms (self 0.84 ms)</span>
                </InfoRow>
                <Aggregated>
                  <AggTitle>Aggregated time</AggTitle>
                  <AggRow>
                    <Donut>
                      <svg width="110" height="110" viewBox="0 0 110 110">
                        <circle cx="55" cy="55" r="44" fill="none" stroke="#fccc12" strokeWidth="22" />
                        <circle cx="55" cy="55" r="44" fill="none" stroke="#c4c4c4" strokeWidth="22" strokeDasharray="101 400" transform="rotate(-89 55 55)" />
                        <circle cx="55" cy="55" r="44" fill="none" stroke="#d8a8ee" strokeWidth="22" strokeDasharray="1.2 400" transform="rotate(-90.5 55 55)" />
                      </svg>
                      <DonutLabel>241 ms</DonutLabel>
                    </Donut>
                    <Legend>
                      {legend.map(([v, c, t]) => (
                        <React.Fragment key={t}>
                          <LegendValue>{v}</LegendValue>
                          <Swatch $s={13} $color={c} />
                          <span>{t}</span>
                        </React.Fragment>
                      ))}
                    </Legend>
                  </AggRow>
                </Aggregated>
              </DetailMain>
              <ScrollTrack $pt={6} $pb={6}><ArrowUp /><Thumb $h={114} /><ArrowDown /></ScrollTrack>
            </DetailBody>
          </Details>
        </Content>
      </Body>
      <Annotation $x={3} $y={51} $w={66} $h={34} />
      <Annotation $x={258} $y={129} $w={619} $h={139} />
      <Annotation $x={272} $y={718} $w={249} $h={76} />
    </Page>
  )
}
